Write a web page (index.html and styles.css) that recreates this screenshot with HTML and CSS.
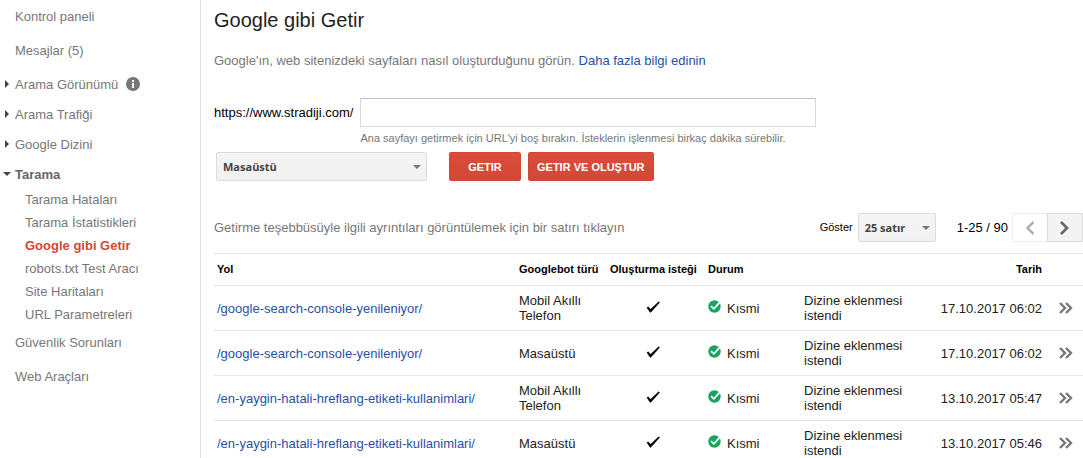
FILE: index.html
```html
<!DOCTYPE html>
<html lang="tr">
  <head>
    <meta charset="UTF-8" />
    <meta name="viewport" content="width=device-width, initial-scale=1.0" />
    <title>Google gibi Getir</title>
    <link rel="stylesheet" href="styles.css">
  </head>
  <body>
    <!-- shared icons -->
    <svg class="sprite" aria-hidden="true">
      <symbol id="tick" viewBox="0 0 14 12">
        <path d="M0.9 6.6 L2.2 5.8 L4.6 8.2 L12.6 0.8 L13.6 1.4 L4.9 11.2 L4 11.2 Z" fill="#000" stroke="#000" stroke-width="0.4" />
      </symbol>
      <symbol id="ok" viewBox="0 0 13 13">
        <circle cx="6.5" cy="6.5" r="6.2" fill="#1aa260" />
        <path d="M3 6.2 L5.9 8.8 L11.4 2.6" fill="none" stroke="#fff" stroke-width="1.8" />
      </symbol>
      <symbol id="more" viewBox="0 0 14 12">
        <path d="M1 1 L6 6 L1 11 M7 1 L12 6 L7 11" fill="none" stroke="#777" stroke-width="2.4" />
      </symbol>
    </svg>

    <div class="page">
      <nav class="sidebar">
        <ul class="menu">
          <li class="spaced"><a href="#">Kontrol paneli</a></li>
          <li class="spaced"><a href="#">Mesajlar (5)</a></li>
          <li class="closed">
            <a href="#">Arama Görünümü</a>
            <svg class="info" width="14" height="14" viewBox="0 0 14 14">
              <circle cx="7" cy="7" r="7" fill="#777" />
              <rect x="6" y="6" width="2" height="5" fill="#fff" />
              <rect x="6" y="3" width="2" height="2" fill="#fff" />
            </svg>
          </li>
          <li class="closed"><a href="#">Arama Trafiği</a></li>
          <li class="closed"><a href="#">Google Dizini</a></li>
          <li class="open">
            <a href="#">Tarama</a>
          </li>
        </ul>
        <ul class="submenu">
          <li><a href="#">Tarama Hataları</a></li>
          <li><a href="#">Tarama İstatistikleri</a></li>
          <li class="active"><a href="#">Google gibi Getir</a></li>
          <li><a href="#">robots.txt Test Aracı</a></li>
          <li><a href="#">Site Haritaları</a></li>
          <li><a href="#">URL Parametreleri</a></li>
        </ul>
        <ul class="menu">
          <li class="spaced"><a href="#">Güvenlik Sorunları</a></li>
          <li><a href="#">Web Araçları</a></li>
        </ul>
      </nav>

      <main class="content">
        <h1>Google gibi Getir</h1>
        <p class="intro">Google'ın, web sitenizdeki sayfaları nasıl oluşturduğunu görün. <a href="#">Daha fazla bilgi edinin</a></p>

        <form action="">
          <div class="url-row">
            <label for="path">https://www.stradiji.com/</label>
            <div class="url-field">
              <input type="text" id="path" name="path" />
              <span class="hint">Ana sayfayı getirmek için URL'yi boş bırakın. İsteklerin işlenmesi birkaç dakika sürebilir.</span>
            </div>
          </div>
          <div class="actions">
            <div class="select bot">
              <select name="bot" aria-label="Googlebot türü">
                <option>Masaüstü</option>
              </select>
            </div>
            <button type="submit" class="red">GETIR</button>
            <button type="button" class="red">GETIR VE OLUŞTUR</button>
          </div>
        </form>

        <div class="toolbar">
          <p>Getirme teşebbüsüyle ilgili ayrıntıları görüntülemek için bir satırı tıklayın</p>
          <label for="rows">Göster</label>
          <div class="select rows">
            <select id="rows" name="rows">
              <option>25 satır</option>
            </select>
          </div>
          <span class="range">1-25 / 90</span>
          <div class="pager">
            <button type="button" class="prev" aria-label="Önceki" disabled>
              <svg width="10" height="14" viewBox="0 0 10 14"><path d="M8.5 1 L2.5 7 L8.5 13" fill="none" stroke="#aaa" stroke-width="2.4" /></svg>
            </button>
            <button type="button" class="next" aria-label="Sonraki">
              <svg width="10" height="14" viewBox="0 0 10 14"><path d="M1 1 L7 7 L1 13" fill="none" stroke="#666" stroke-width="2.6" /></svg>
            </button>
          </div>
        </div>

        <table>
          <colgroup>
            <col />
            <col class="col-bot" />
            <col class="col-render" />
            <col class="col-status" />
            <col class="col-detail" />
            <col class="col-date" />
            <col class="col-more" />
          </colgroup>
          <thead>
            <tr>
              <th>Yol</th>
              <th>Googlebot türü</th>
              <th>Oluşturma isteği</th>
              <th>Durum</th>
              <th></th>
              <th class="date">Tarih</th>
              <th></th>
            </tr>
          </thead>
          <tbody>
            <tr>
              <td><a href="#">/google-search-console-yenileniyor/</a></td>
              <td>Mobil Akıllı Telefon</td>
              <td class="render"><svg width="14" height="12"><use href="#tick" /></svg></td>
              <td><div class="status"><svg width="13" height="13"><use href="#ok" /></svg>Kısmi</div></td>
              <td>Dizine eklenmesi istendi</td>
              <td class="date">17.10.2017 06:02</td>
              <td class="more"><svg width="14" height="12"><use href="#more" /></svg></td>
            </tr>
            <tr>
              <td><a href="#">/google-search-console-yenileniyor/</a></td>
              <td>Masaüstü</td>
              <td class="render"><svg width="14" height="12"><use href="#tick" /></svg></td>
              <td><div class="status"><svg width="13" height="13"><use href="#ok" /></svg>Kısmi</div></td>
              <td>Dizine eklenmesi istendi</td>
              <td class="date">17.10.2017 06:02</td>
              <td class="more"><svg width="14" height="12"><use href="#more" /></svg></td>
            </tr>
            <tr>
              <td><a href="#">/en-yaygin-hatali-hreflang-etiketi-kullanimlari/</a></td>
              <td>Mobil Akıllı Telefon</td>
              <td class="render"><svg width="14" height="12"><use href="#tick" /></svg></td>
              <td><div class="status"><svg width="13" height="13"><use href="#ok" /></svg>Kısmi</div></td>
              <td>Dizine eklenmesi istendi</td>
              <td class="date">13.10.2017 05:47</td>
              <td class="more"><svg width="14" height="12"><use href="#more" /></svg></td>
            </tr>
            <tr>
              <td><a href="#">/en-yaygin-hatali-hreflang-etiketi-kullanimlari/</a></td>
              <td>Masaüstü</td>
              <td class="render"><svg width="14" height="12"><use href="#tick" /></svg></td>
              <td><div class="status"><svg width="13" height="13"><use href="#ok" /></svg>Kısmi</div></td>
              <td>Dizine eklenmesi istendi</td>
              <td class="date">13.10.2017 05:46</td>
              <td class="more"><svg width="14" height="12"><use href="#more" /></svg></td>
            </tr>
          </tbody>
        </table>
      </main>
    </div>
  </body>
</html>
```
FILE: styles.css
```css
* {
  box-sizing: border-box;
}
body {
  margin: 0;
  background-color: #fff;
  color: #222;
  font-family: "Liberation Sans", Arial, sans-serif;
  font-size: 13px;
  line-height: 15px;
}
a {
  color: #1f4fa8;
  text-decoration: none;
}
h1,
p,
ul {
  margin: 0;
  padding: 0;
}
ul {
  list-style: none;
}
.sprite {
  display: none;
}
.page {
  display: flex;
  height: 100vh;
  overflow: hidden;
}

/* left menu */
.sidebar {
  flex: none;
  width: 201px;
  padding-top: 1px;
  border-right: 1px solid #e0e0e0;
}
.sidebar a {
  color: #777;
}
.menu li {
  display: flex;
  align-items: center;
  height: 30px;
  padding-left: 15px;
}
.menu .spaced {
  margin-bottom: 4px;
}
.menu .closed,
.menu .open {
  padding-left: 0;
}
.closed::before,
.open::before {
  content: "";
  border: 4px solid transparent;
}
.closed::before {
  margin-left: 5px;
  margin-right: 6px;
  border-left-color: #444;
  border-right-width: 0;
}
.open::before {
  margin-left: 3px;
  margin-right: 4px;
  border-top-color: #444;
  border-bottom-width: 0;
}
.menu .open a {
  color: #666;
  font-weight: bold;
}
.info {
  margin-left: 8px;
}
.submenu li {
  height: 23px;
  padding-left: 25px;
  line-height: 22px;
}
.submenu .active a {
  color: #d14836;
  font-weight: bold;
}

/* right side */
.content {
  flex: 1;
  min-width: 0;
  padding-top: 8px;
  padding-left: 13px;
}
h1 {
  font-size: 20px;
  font-weight: normal;
  line-height: 24px;
}
.intro {
  margin-top: 21px;
  color: #777;
}
.url-row {
  display: flex;
  gap: 7px;
  margin-top: 30px;
}
.url-row label {
  color: #000;
  line-height: 29px;
}
.url-field {
  flex: 0 1 456px;
}
.url-field input {
  display: block;
  width: 100%;
  height: 29px;
  padding: 0 8px;
  border: 1px solid #d9d9d9;
  border-top-color: #c0c0c0;
  font: inherit;
}
.hint {
  display: block;
  margin-top: 4px;
  color: #777;
  font-size: 11px;
}
.actions {
  display: flex;
  gap: 7px;
  margin-top: 6px;
  padding-left: 2px;
}

/* buttons and drop-downs */
.select {
  position: relative;
}
.select::after {
  content: "";
  position: absolute;
  top: 13px;
  right: 6px;
  border: 4px solid transparent;
  border-top-color: #777;
  border-bottom-width: 0;
  pointer-events: none;
}
.select select {
  display: block;
  width: 100%;
  height: 29px;
  padding: 0 6px;
  border: 1px solid #dcdcdc;
  border-radius: 2px;
  background: linear-gradient(#f5f5f5, #f1f1f1);
  color: #444;
  font-family: "Open Sans", sans-serif;
  font-size: 11px;
  font-weight: bold;
  appearance: none;
}
.bot {
  width: 211px;
  margin-right: 15px;
}
.rows {
  width: 78px;
}
.red {
  height: 29px;
  padding: 0 8px;
  min-width: 72px;
  border: 1px solid #d14836;
  border-radius: 2px;
  background: linear-gradient(#dd4b39, #d14836);
  color: #fff;
  font-family: inherit;
  font-size: 11px;
  font-weight: bold;
}

/* table controls */
.toolbar {
  display: flex;
  align-items: center;
  margin-top: 32px;
  margin-bottom: 11px;
}
.toolbar p {
  flex: 1;
  color: #777;
}
.toolbar label {
  margin-right: 5px;
  color: #000;
  font-size: 11px;
}
.range {
  margin-left: 21px;
  margin-right: 4px;
  color: #000;
}
.pager {
  display: flex;
}
.pager button {
  display: flex;
  align-items: center;
  justify-content: center;
  width: 36px;
  height: 29px;
  padding: 0;
  border: 1px solid #dcdcdc;
  background-color: #f3f3f3;
}
.pager .prev {
  width: 35px;
  border-color: #eee;
  border-right: 0;
  background-color: #fff;
}

/* fetch history */
table {
  width: 100%;
  table-layout: fixed;
  border-collapse: collapse;
}
.col-bot {
  width: 91px;
}
.col-render {
  width: 98px;
}
.col-status {
  width: 96px;
}
.col-detail {
  width: 114px;
}
.col-date {
  width: 130px;
}
.col-more {
  width: 38px;
}
tr {
  height: 45px;
  border-top: 1px solid #e5e5e5;
}
thead tr {
  height: 32px;
}
th,
td {
  padding: 0 3px;
  text-align: left;
}
th {
  color: #000;
  font-size: 11px;
  white-space: nowrap;
}
.render {
  padding-right: 10px;
  text-align: center;
}
.status {
  display: flex;
  gap: 6px;
  line-height: 17px;
}
.date {
  text-align: right;
}
.more {
  padding-right: 0;
}
.more svg {
  display: block;
  margin: 0 auto;
}
```
